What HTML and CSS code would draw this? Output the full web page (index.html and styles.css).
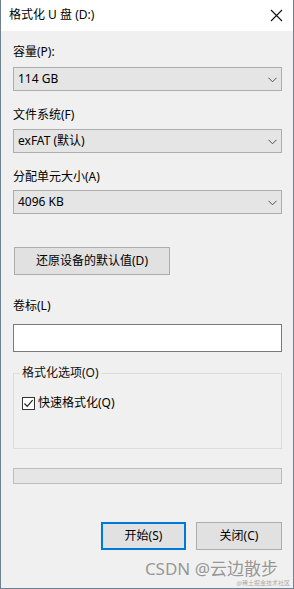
FILE: index.html
```html
<!DOCTYPE html>
<html lang="zh-CN">

<head>
    <meta charset="UTF-8">
    <title>格式化 U 盘 (D:)</title>
    <link rel="stylesheet" href="styles.css">
</head>

<body>

    <div class="window">

        <div class="titlebar">
            <span class="title">格式化 U 盘 (D:)</span>
            <svg class="close" width="15" height="15" viewBox="0 0 15 15">
                <path d="M2 2 L13 13 M13 2 L2 13" stroke="#111" stroke-width="1.1" fill="none" />
            </svg>
        </div>

        <div class="content">
            <div class="label first">容量(P):</div>
            <div class="combo combo-1">
                <span>114 GB</span>
                <svg class="chevron" width="9" height="6" viewBox="0 0 9 6">
                    <path d="M0.5 0.8 L4.5 4.8 L8.5 0.8" stroke="#505050" stroke-width="1" fill="none" />
                </svg>
            </div>

            <div class="label">文件系统(F)</div>
            <div class="combo">
                <span>exFAT (默认)</span>
                <svg class="chevron" width="9" height="6" viewBox="0 0 9 6">
                    <path d="M0.5 0.8 L4.5 4.8 L8.5 0.8" stroke="#505050" stroke-width="1" fill="none" />
                </svg>
            </div>

            <div class="label">分配单元大小(A)</div>
            <div class="combo combo-3">
                <span>4096 KB</span>
                <svg class="chevron" width="9" height="6" viewBox="0 0 9 6">
                    <path d="M0.5 0.8 L4.5 4.8 L8.5 0.8" stroke="#505050" stroke-width="1" fill="none" />
                </svg>
            </div>

            <button class="btn restore">还原设备的默认值(D)</button>

            <div class="label volume">卷标(L)</div>
            <div class="textbox"></div>

            <fieldset class="group">
                <legend>格式化选项(O)</legend>
                <div class="check">
                    <span class="box">
                        <svg width="11" height="11" viewBox="0 0 11 11">
                            <path d="M1.5 5.5 L4.2 8.3 L9.6 2.2" stroke="#222" stroke-width="1.2" fill="none" />
                        </svg>
                    </span>
                    快速格式化(Q)
                </div>
            </fieldset>

            <div class="progress"></div>

            <div class="actions">
                <button class="btn primary">开始(S)</button>
                <button class="btn">关闭(C)</button>
            </div>
        </div>

        <!-- filigrane de la capture -->
        <div class="watermark">CSDN @云边散步</div>
        <div class="watermark-small">@稀土掘金技术社区</div>

    </div>

</body>

</html>
```

FILE: styles.css
```css
body {
    margin: 0;
    background-color: #f0f0f0;
    font-family: "Noto Sans", "Noto Sans CJK SC", sans-serif;
    font-size: 12px;
    color: #000;
}

.window {
    position: relative;
    width: 294px;
    height: 589px;
    box-sizing: border-box;
    border: 1px solid #6f8190;
    border-top: none;
    background-color: #f0f0f0;
    display: flex;
    flex-direction: column;
}

.titlebar {
    height: 31px;
    background-color: #fff;
    display: flex;
    align-items: center;
    justify-content: space-between;
    padding: 0 9px 0 8px;
}

.title {
    line-height: 16px;
    margin-top: -1px;
}

.close {
    margin-top: -1px;
}

.content {
    display: flex;
    flex-direction: column;
    padding: 0 11px 0 12px;
}

.label {
    line-height: 16px;
    height: 16px;
    margin-top: 16px;
    white-space: nowrap;
}

.label.first {
    margin-top: 13px;
}

.label.volume {
    margin-top: 23px;
}

.combo {
    height: 24px;
    box-sizing: border-box;
    margin-top: 6px;
    background-color: #e5e5e5;
    border: 1px solid #adadad;
    display: flex;
    align-items: center;
    justify-content: space-between;
    padding: 0 4px 0 4px;
    line-height: 16px;
}

.combo-1 {
    margin-top: 7px;
}

.combo-3 {
    margin-top: 5px;
}

.chevron {
    margin-top: 1px;
}

.btn {
    font-family: inherit;
    font-size: 12px;
    color: #000;
    background-color: #e1e1e1;
    border: 1px solid #adadad;
    height: 28px;
    box-sizing: border-box;
    padding: 0;
    line-height: 16px;
    margin: 0;
}

.restore {
    width: 156px;
    margin-top: 33px;
    margin-left: 1px;
}

.textbox {
    height: 28px;
    box-sizing: border-box;
    margin-top: 10px;
    background-color: #fff;
    border: 1px solid #7a7a7a;
}

.group {
    margin: 13px 0 0 0;
    height: 84px;
    box-sizing: border-box;
    border: 1px solid #dcdcdc;
    padding: 0 8px;
    min-width: 0;
}

.group legend {
    padding: 0 2px;
    margin-left: -2px;
    line-height: 16px;
    color: #111;
}

.check {
    display: flex;
    align-items: center;
    margin-top: 14px;
    line-height: 16px;
    gap: 3px;
}

.box {
    width: 13px;
    height: 13px;
    box-sizing: border-box;
    border: 1px solid #333;
    background-color: #fff;
    display: flex;
    align-items: center;
    justify-content: center;
}

.progress {
    height: 16px;
    box-sizing: border-box;
    margin-top: 19px;
    background-color: #e6e6e6;
    border: 1px solid #bcbcbc;
}

.actions {
    display: flex;
    justify-content: flex-end;
    gap: 10px;
    margin-top: 38px;
}

.actions .btn {
    width: 86px;
}

.primary {
    border: 2px solid #0078d7;
    width: 85px !important;
}

.watermark {
    position: absolute;
    right: 15px;
    top: 558px;
    font-size: 17px;
    line-height: 22px;
    color: rgba(120, 120, 120, 0.75);
    white-space: nowrap;
}

.watermark-small {
    position: absolute;
    right: 3px;
    top: 579px;
    font-size: 6px;
    line-height: 8px;
    color: rgba(150, 150, 150, 0.8);
    white-space: nowrap;
}
```
